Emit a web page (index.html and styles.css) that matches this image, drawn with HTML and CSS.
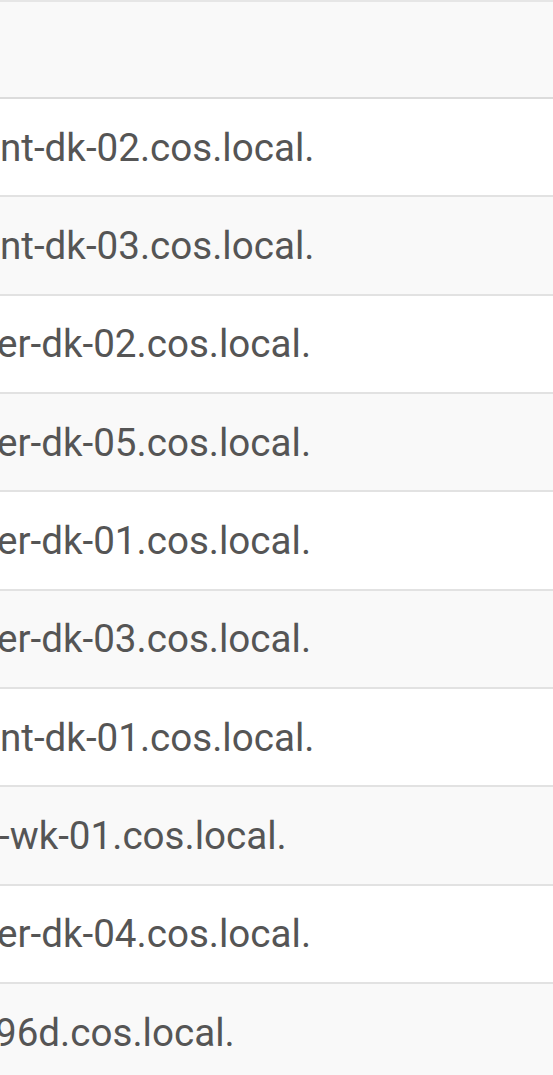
FILE: index.html
```html
<!DOCTYPE html>
<html>
<head>
<meta charset="utf-8">
<link rel="stylesheet" href="styles.css">
</head>
<body>
<div class="table">
  <div class="head"></div>
  <div class="row"><span class="cell">nt-dk-02.cos.local.</span></div>
  <div class="row alt"><span class="cell">nt-dk-03.cos.local.</span></div>
  <div class="row"><span class="cell cut">er-dk-02.cos.local.</span></div>
  <div class="row alt"><span class="cell cut">er-dk-05.cos.local.</span></div>
  <div class="row"><span class="cell cut">er-dk-01.cos.local.</span></div>
  <div class="row alt"><span class="cell cut">er-dk-03.cos.local.</span></div>
  <div class="row"><span class="cell">nt-dk-01.cos.local.</span></div>
  <div class="row alt"><span class="cell wk">-wk-01.cos.local.</span></div>
  <div class="row"><span class="cell cut">er-dk-04.cos.local.</span></div>
  <div class="row alt"><span class="cell cut-more">96d.cos.local.</span></div>
</div>
</body>
</html>
```

FILE: styles.css
```css
html, body {
  margin: 0;
  padding: 0;
  background: #ffffff;
  overflow: hidden;
}
.table {
  width: 553px;
  border-top: 2px solid #e6e6e6;
  font-family: Roboto, "Liberation Sans", sans-serif;
  font-size: 38.6px;
  color: #555555;
}
.head {
  height: 95px;
  background: #f9f9f9;
  border-bottom: 2px solid #dcdcdc;
}
.row {
  height: 96.33px;
  border-bottom: 2px solid #e2e2e2;
  background: #ffffff;
  display: flex;
  align-items: center;
  overflow: hidden;
}
.row.alt {
  background: #f9f9f9;
}
.cell {
  white-space: nowrap;
  margin-left: 0;
}
.cell.cut {
  margin-left: -3px;
}
.cell.wk {
  margin-left: -1px;
}
.cell.cut-more {
  margin-left: -5px;
}
```
